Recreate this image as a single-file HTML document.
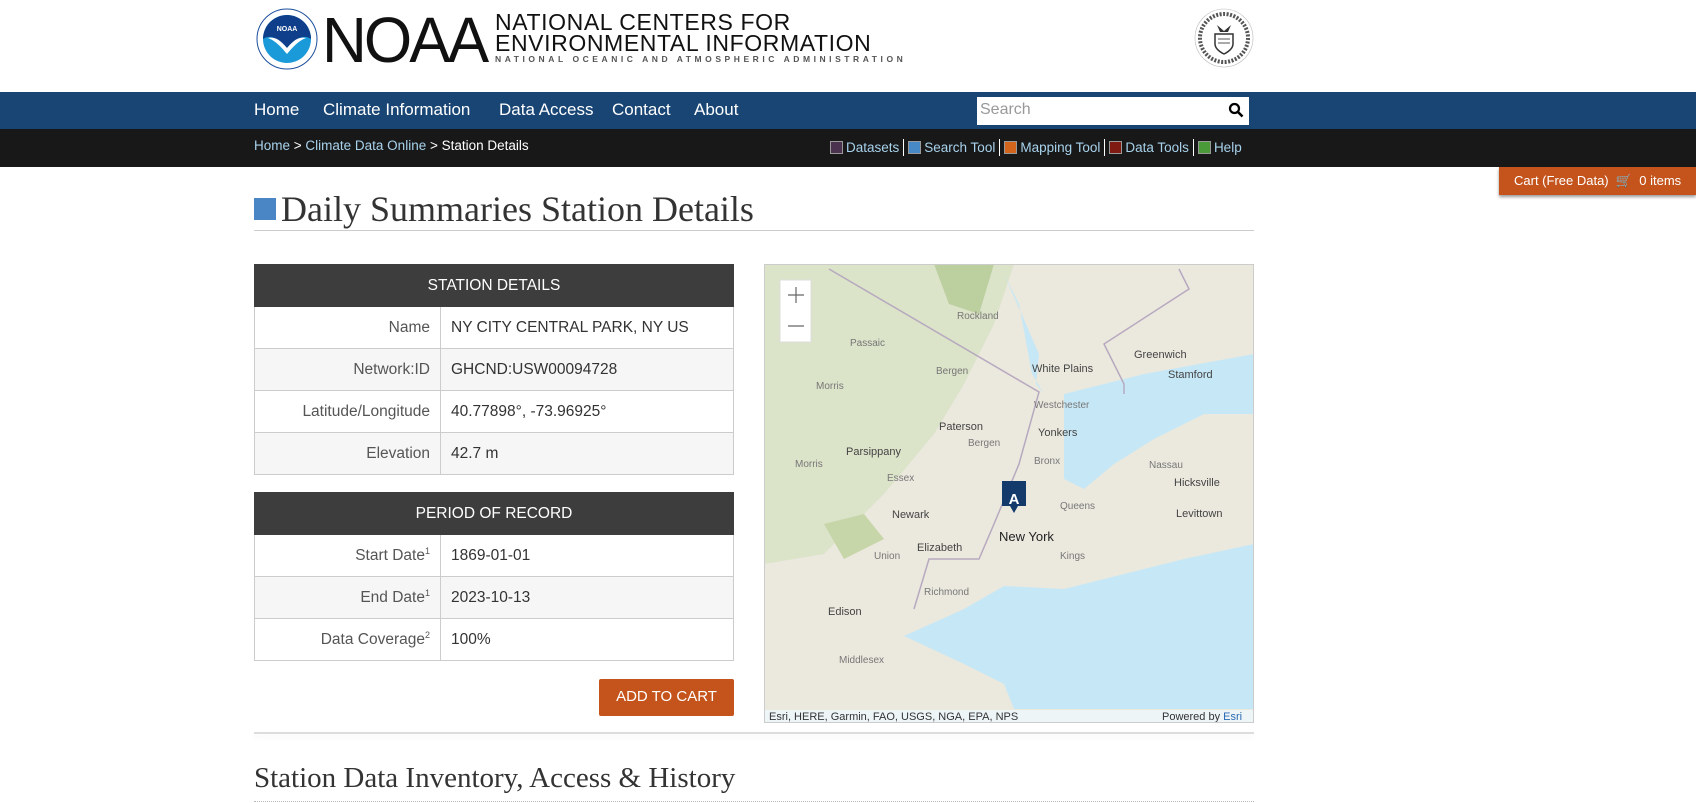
<!DOCTYPE html>
<html><head><meta charset="utf-8">
<style>
*{margin:0;padding:0;box-sizing:border-box}
body{width:1696px;height:803px;overflow:hidden;background:#fff;font-family:"Liberation Sans","DejaVu Sans",sans-serif;position:relative}
.abs{position:absolute}
.nav{top:92px;left:0;width:1696px;height:37px;background:#184574}
.nav span{position:absolute;top:8px;color:#fff;font-size:17px}
.bar{top:129px;left:0;width:1696px;height:38px;background:#181818}
.crumb{top:138px;left:254px;font-size:13.5px;color:#fff}
.crumb a{color:#a8d2ec;text-decoration:none}
.links{top:139px;left:830px;font-size:13.5px;color:#a8d2ec;white-space:nowrap}
.links i{display:inline-block;width:13px;height:13px;border:1px solid #999;vertical-align:-2px;margin-right:3px}
.links b{display:inline-block;width:1px;height:17px;background:#fff;vertical-align:-4px;margin:0 4px}
table{position:absolute;left:254px;width:480px;border-collapse:collapse;font-size:15.5px}
th{background:#3d3d3d;color:#fff;font-weight:normal;height:42px;border:1px solid #3d3d3d}
td{border:1px solid #ccc;height:42px;color:#333}
td.l{width:186px;text-align:right;padding-right:10px;color:#555}
td.v{padding-left:10px}
tr:nth-child(odd) td{background:#f6f6f6}
sup{font-size:9px}
</style></head><body>
<svg class="abs" style="left:256px;top:8px" width="62" height="62" viewBox="0 0 62 62">
<circle cx="31" cy="31" r="30" fill="#fff" stroke="#1c4f9c" stroke-width="1"/>
<circle cx="31" cy="31" r="24" fill="#1b9ad9"/>
<path d="M7 31A24 24 0 0 1 55 31C48 26 40 30 31 40C22 30 14 26 7 31Z" fill="#0f3f8a"/>
<path d="M12 30C20 28 26 34 31 40C36 34 42 28 50 30C42 33 36 40 31 46C26 40 20 33 12 30Z" fill="#fff"/>
<text x="31" y="23" font-size="7" fill="#fff" text-anchor="middle" font-weight="bold" font-family="Liberation Sans">NOAA</text>
</svg>
<div class="abs" style="left:322px;top:8px;font-size:64px;letter-spacing:-3px;color:#111;line-height:64px;transform:scaleX(0.97);transform-origin:left">NOAA</div>
<div class="abs" style="left:495px;top:12px;font-size:23.5px;line-height:21px;color:#111;letter-spacing:0.6px;transform:scaleX(0.98);transform-origin:left">NATIONAL CENTERS FOR<br>ENVIRONMENTAL INFORMATION</div>
<div class="abs" style="left:495px;top:54px;font-size:8.5px;letter-spacing:3.55px;color:#555;font-weight:bold">NATIONAL OCEANIC AND ATMOSPHERIC ADMINISTRATION</div>
<svg class="abs" style="left:1193px;top:7px" width="62" height="62" viewBox="0 0 62 62">
<circle cx="31" cy="31" r="29" fill="none" stroke="#bbb" stroke-width="0.6"/>
<circle cx="31" cy="31" r="24" fill="none" stroke="#555" stroke-width="4" stroke-dasharray="2 1.5"/>
<path d="M22 27h18v10c0 6-9 10-9 10s-9-4-9-10z" fill="none" stroke="#333" stroke-width="1.5"/>
<path d="M25 32h12M25 36h12" stroke="#555"/>
<path d="M24 18l7 6 7-6-3 7h-8z" fill="#333"/>
</svg>
<div class="abs nav"><span style="left:254px">Home</span><span style="left:323px">Climate Information</span><span style="left:499px">Data Access</span><span style="left:612px">Contact</span><span style="left:694px">About</span>
<div class="abs" style="left:977px;top:5px;width:272px;height:28px;background:#fff;color:#999;font-size:16px;padding:4px 3px">Search</div>
<svg class="abs" style="left:1228px;top:10px" width="16" height="16" viewBox="0 0 16 16"><circle cx="6.5" cy="6.5" r="4.5" fill="none" stroke="#000" stroke-width="2.2"/><path d="M10 10l4.5 4.5" stroke="#000" stroke-width="2.6"/></svg>
</div>
<div class="abs bar"></div>
<div class="abs crumb"><a>Home</a> &gt; <a>Climate Data Online</a> &gt; Station Details</div>
<div class="abs links"><i style="background:#4b3350"></i>Datasets<b></b><i style="background:#4788c7"></i>Search Tool<b></b><i style="background:#d2641c"></i>Mapping Tool<b></b><i style="background:#7e1a12"></i>Data Tools<b></b><i style="background:#4b9a3a"></i>Help</div>
<div class="abs" style="left:1499px;top:167px;width:197px;height:28px;background:#c4541c;color:#fff;font-size:13px;padding-top:6px;padding-left:15px;box-shadow:0 2px 3px rgba(0,0,0,.4);white-space:nowrap">Cart (Free Data) &nbsp;🛒&nbsp; 0 items</div>

<div class="abs" style="left:254px;top:198px;width:22px;height:22px;background:#4a86c5"></div>
<div class="abs" style="left:281px;top:188px;font-family:'Liberation Serif',serif;font-size:36px;color:#333">Daily Summaries Station Details</div>
<div class="abs" style="left:254px;top:230px;width:1000px;height:1px;background:#ccc"></div>

<table style="top:264px">
<tr><th colspan="2">STATION DETAILS</th></tr>
<tr><td class="l">Name</td><td class="v">NY CITY CENTRAL PARK, NY US</td></tr>
<tr><td class="l">Network:ID</td><td class="v">GHCND:USW00094728</td></tr>
<tr><td class="l">Latitude/Longitude</td><td class="v">40.77898°, -73.96925°</td></tr>
<tr><td class="l">Elevation</td><td class="v">42.7 m</td></tr>
</table>
<table style="top:492px">
<tr><th colspan="2">PERIOD OF RECORD</th></tr>
<tr><td class="l">Start Date<sup>1</sup></td><td class="v">1869-01-01</td></tr>
<tr><td class="l">End Date<sup>1</sup></td><td class="v">2023-10-13</td></tr>
<tr><td class="l">Data Coverage<sup>2</sup></td><td class="v">100%</td></tr>
</table>
<div class="abs" style="left:599px;top:679px;width:135px;height:37px;background:#c4541c;border-radius:2px;color:#fff;font-size:15px;text-align:center;padding-top:9px">ADD TO CART</div>

<svg class="abs" style="left:764px;top:264px" width="490" height="459" viewBox="0 0 490 459">
<rect width="490" height="459" fill="#ebe8de"/>
<path d="M0 0H250L230 60 200 120 170 170 120 230 60 290 0 300Z" fill="#dbe3c9"/>
<path d="M170 0H230L215 50 185 40Z" fill="#bccf9f"/>
<path d="M60 260l40-10 20 25-40 20z" fill="#c6d6a8"/>
<path d="M300 130L380 110 490 90V150L440 150 390 175 350 200 320 225 300 215Z" fill="#c6e8f6"/>
<path d="M140 372L200 345 240 322 300 325 360 310 420 295 490 280V445H250L240 420 200 400Z" fill="#c6e8f6"/>
<path d="M240 10L275 90 272 120 280 130 268 110 255 40Z" fill="#c6e8f6"/>
<g fill="none" stroke="#b7a9bf" stroke-width="1.5"><path d="M65 5L275 128 255 200 230 260 215 295 165 295 150 345"/><path d="M415 5L425 25 340 80 360 120 360 130"/></g>
<g font-family="Liberation Sans" fill="#444" font-size="11">
<text x="268" y="108">White Plains</text><text x="175" y="166">Paterson</text><text x="82" y="191">Parsippany</text><text x="274" y="172">Yonkers</text><text x="128" y="254">Newark</text><text x="153" y="287">Elizabeth</text><text x="235" y="277" font-size="13" fill="#222">New York</text><text x="410" y="222">Hicksville</text><text x="412" y="253">Levittown</text><text x="370" y="94">Greenwich</text><text x="404" y="114">Stamford</text><text x="64" y="351">Edison</text>
<g fill="#777" font-size="10"><text x="193" y="55">Rockland</text><text x="86" y="82">Passaic</text><text x="172" y="110">Bergen</text><text x="52" y="125">Morris</text><text x="31" y="203">Morris</text><text x="123" y="217">Essex</text><text x="204" y="182">Bergen</text><text x="296" y="295">Kings</text><text x="160" y="331">Richmond</text><text x="110" y="295">Union</text><text x="296" y="245">Queens</text><text x="385" y="204">Nassau</text><text x="270" y="144">Westchester</text><text x="75" y="399">Middlesex</text><text x="270" y="200">Bronx</text></g>
</g>
<rect x="16" y="16" width="31" height="62" fill="#fff" stroke="#ddd"/>
<path d="M24 31h16M32 23v16M24 62h16" stroke="#666" stroke-width="1.2"/>
<path d="M238 217h24v25h-8l-4 7-4-7h-8z" fill="#133a6b"/>
<text x="250" y="240" fill="#fff" font-size="15" font-weight="bold" text-anchor="middle" font-family="Liberation Sans">A</text>
<rect x="0" y="446" width="490" height="13" fill="#eef6fa" opacity=".9"/>
<text x="5" y="456" font-size="11" fill="#333" font-family="Liberation Sans">Esri, HERE, Garmin, FAO, USGS, NGA, EPA, NPS</text>
<text x="398" y="456" font-size="11" fill="#333" font-family="Liberation Sans">Powered by <tspan fill="#2a6ab4">Esri</tspan></text>
<rect x="0.5" y="0.5" width="489" height="458" fill="none" stroke="#ccc"/>
</svg>

<div class="abs" style="left:254px;top:732px;width:1000px;height:2px;background:#ddd;box-shadow:0 3px 6px rgba(0,0,0,.06)"></div>
<div class="abs" style="left:254px;top:762px;font-family:'Liberation Serif',serif;font-size:29px;color:#333">Station Data Inventory, Access &amp; History</div>
<div class="abs" style="left:254px;top:801px;width:1000px;border-top:1px dotted #bbb"></div>
</body></html>
